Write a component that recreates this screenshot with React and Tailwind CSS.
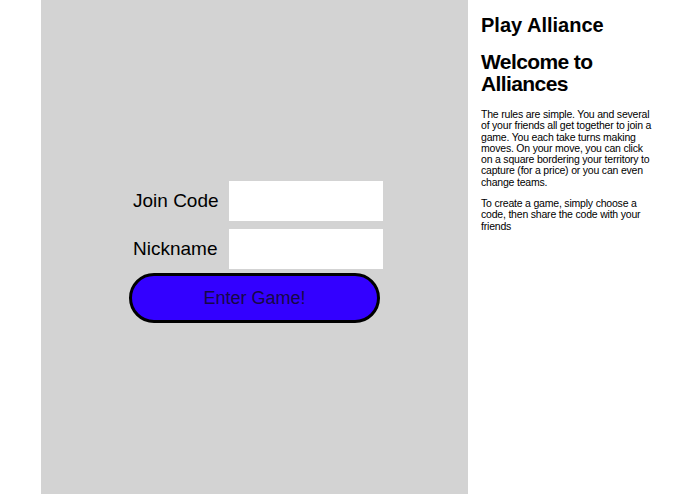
import { useState } from 'react'

const App = () => {
  const [form, setForm] = useState({ code: '', nickname: '' })

  const handleChange = (e) => {
    setForm({ ...form, [e.target.name]: e.target.value })
  }

  return (
    <div className="flex min-h-[494px] bg-white pl-[41px] font-['Liberation_Sans',Arial,sans-serif] text-black">
      {/* game area */}
      <div className="flex w-[427px] shrink-0 items-center justify-center bg-[#d3d3d3] pl-[3px] pt-[10px]">
        <form className="flex w-[254px] flex-col" onSubmit={(e) => e.preventDefault()}>
          <div className="flex items-center pl-[4px]">
            <label className="w-[96px] text-[19px]">Join Code</label>
            <input
              name="code"
              value={form.code}
              onChange={handleChange}
              className="h-[40px] w-[154px] bg-white px-2 text-[16px] outline-none"
            />
          </div>
          <div className="mt-[8px] flex items-center pl-[4px]">
            <label className="w-[96px] text-[19px]">Nickname</label>
            <input
              name="nickname"
              value={form.nickname}
              onChange={handleChange}
              className="h-[40px] w-[154px] bg-white px-2 text-[16px] outline-none"
            />
          </div>
          <button
            type="submit"
            className="mt-[4px] h-[50px] w-[251px] rounded-full border-[3px] border-black bg-[#3300ff] text-[18px] text-[#170846]"
          >
            Enter Game!
          </button>
        </form>
      </div>

      {/* rules */}
      <div className="ml-[13px] w-[174px] shrink-0 pt-[13px]">
        <h1 className="text-[20px] font-bold leading-[24px]">Play Alliance</h1>
        <h2 className="mt-[14px] text-[21px] font-bold leading-[22px] tracking-[-0.6px]">Welcome to Alliances</h2>
        <p className="mt-[14px] text-[10.5px] leading-[11.3px] tracking-[-0.2px]">
          The rules are simple. You and several of your friends all get together to join a game. You
          each take turns making moves. On your move, you can click on a square bordering your
          territory to capture (for a price) or you can even change teams.
        </p>
        <p className="mt-[10px] text-[10.5px] leading-[11.3px] tracking-[-0.2px]">
          To create a game, simply choose a code, then share the code with your friends
        </p>
      </div>
    </div>
  )
}

export default App
